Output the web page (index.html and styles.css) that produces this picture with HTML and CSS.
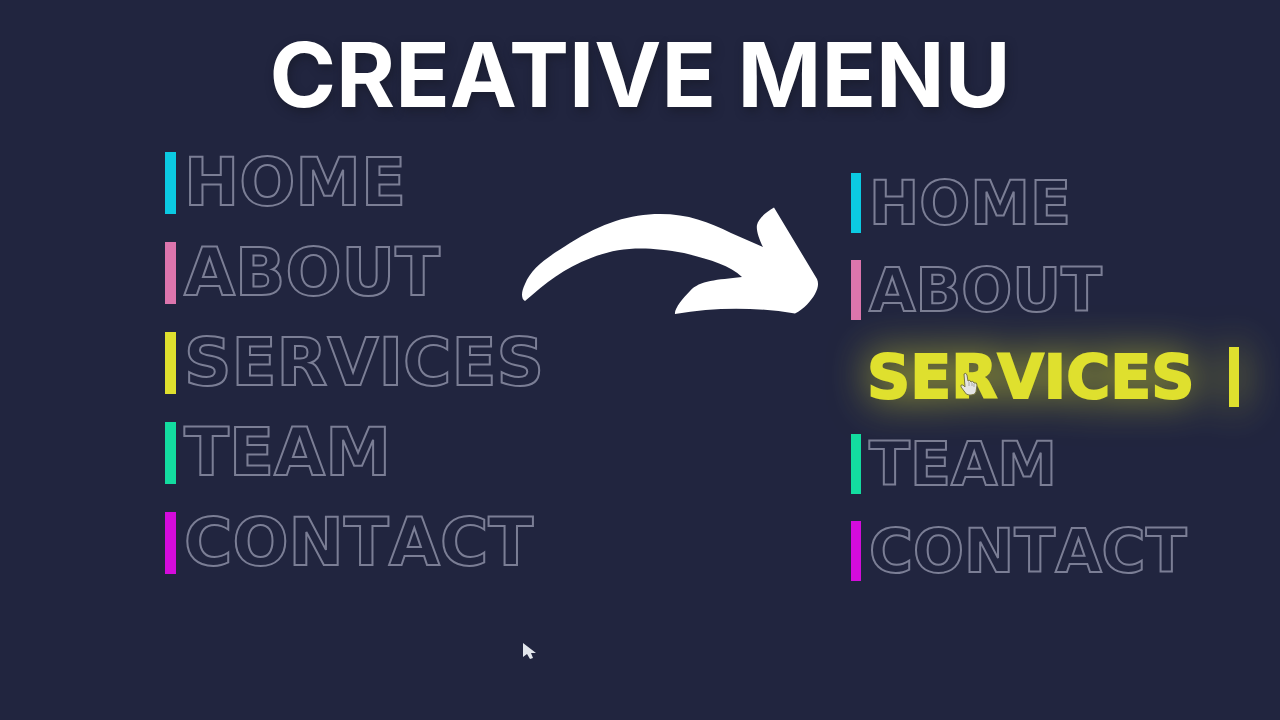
FILE: index.html
```html
<!DOCTYPE html>
<html lang="en">
<head>
<meta charset="utf-8">
<meta name="viewport" content="width=device-width, initial-scale=1">
<title>Creative Menu</title>
<link rel="stylesheet" href="styles.css">
</head>
<body>
<main class="stage">
  <h1 class="title">CREATIVE MENU</h1>
  <div class="demos">
    <nav class="menu menu-large" aria-label="Resting menu">
      <a class="item cyan" href="#home">HOME</a>
      <a class="item pink" href="#about">ABOUT</a>
      <a class="item yellow" href="#services">SERVICES</a>
      <a class="item green" href="#team">TEAM</a>
      <a class="item magenta" href="#contact">CONTACT</a>
    </nav>
    <nav class="menu menu-small" aria-label="Hovered menu">
      <a class="item cyan" href="#home">HOME</a>
      <a class="item pink" href="#about">ABOUT</a>
      <a class="item yellow active" href="#services">SERVICES</a>
      <a class="item green" href="#team">TEAM</a>
      <a class="item magenta" href="#contact">CONTACT</a>
    </nav>
  </div>
  <svg class="arrow" viewBox="0 0 320 130" aria-hidden="true">
    <path d="M15 106 C11 104 11 97 15 89 C22 72 38 62 60 48 C92 28 120 19 150 19 C178 19 199 27 221 38 L253 52 C249 44 246 35 247 30 C248 24 256 17 264 12.500 L307 84 C309 89 308 93 305 99 C301 106 294 114 285 118.500 C245 112 205 112 165 119 C164 114 173 103 180 96 C190 85 207 85 232 82 C220 70 198 64 174 58 C135 51 109 52 81 63 C54 73 36 88 15 106 Z"/>
  </svg>
  <svg class="hand" viewBox="0 0 18 24" aria-hidden="true">
    <path d="M4 2 Q6 0 7 3 L8 9 Q10 7 11 10 Q13 8 14 11 Q17 10 17 13 L16 20 Q15 23 11 23 H9 Q6 23 4 19 L1 15 Q0 12 3 13 L5 15 Z"/>
    <path class="knuckles" d="M9 10 V14 M12 11 V14 M14 12 V15"/>
  </svg>
  <svg class="pointer" viewBox="0 0 14 18" aria-hidden="true">
    <path d="M1 1 V15 L5 12 L8 17 L11 16 L9 11 H14 Z"/>
  </svg>
</main>
</body>
</html>
```
FILE: styles.css
```css
* {
  box-sizing: border-box;
}

body {
  margin: 0;
  background: #21253f;
  font-family: Inter, "Liberation Sans", sans-serif;
  font-weight: 700;
}

.stage {
  position: relative;
  min-height: 100vh;
  overflow: hidden;
}

.title {
  margin: 0;
  padding-top: 20px;
  color: #fff;
  font-size: 90px;
  line-height: 110px;
  text-align: center;
  text-shadow: 2px 4px 10px rgba(20, 22, 32, 0.5);
}

.demos {
  display: flex;
  justify-content: space-between;
  padding: 22px 41px 0 165px;
  font-family: "DejaVu Sans", sans-serif;
  font-kerning: none;
}

.menu {
  display: flex;
  flex-direction: column;
}

.menu-large {
  gap: 28px;
  font-size: 66px;
  line-height: 62px;
}

.menu-small {
  flex-basis: 388px;
  gap: 27px;
  padding-top: 21px;
  font-size: 60px;
  line-height: 60px;
}

.item {
  display: flex;
  gap: 8px;
  color: transparent;
  text-decoration: none;
  -webkit-text-stroke: 2px #7b7e95;
}

.item::before {
  content: "";
  width: 10px;
  background: var(--accent);
}

.menu-large .item::before {
  width: 11px;
}

.cyan { --accent: #0bcae2; }
.pink { --accent: #dc75ad; }
.yellow { --accent: #dfe02e; }
.green { --accent: #13dca0; }
.magenta { --accent: #d40bdc; }

.active {
  justify-content: space-between;
  padding-left: 16px;
  color: var(--accent);
  -webkit-text-stroke: 2px var(--accent);
  filter: drop-shadow(0 0 20px rgba(223, 224, 46, 0.8));
}

.active::before {
  order: 1;
}

.arrow,
.hand,
.pointer {
  position: absolute;
}

.arrow {
  top: 195px;
  left: 510px;
  width: 320px;
  fill: #fff;
}

.hand {
  top: 372px;
  left: 960px;
  width: 18px;
  fill: #e4e4e4;
  stroke: #77763f;
}

.knuckles {
  fill: none;
  stroke: #aaa;
}

.pointer {
  top: 642px;
  left: 522px;
  width: 14px;
  fill: #e2e6ec;
}
```
